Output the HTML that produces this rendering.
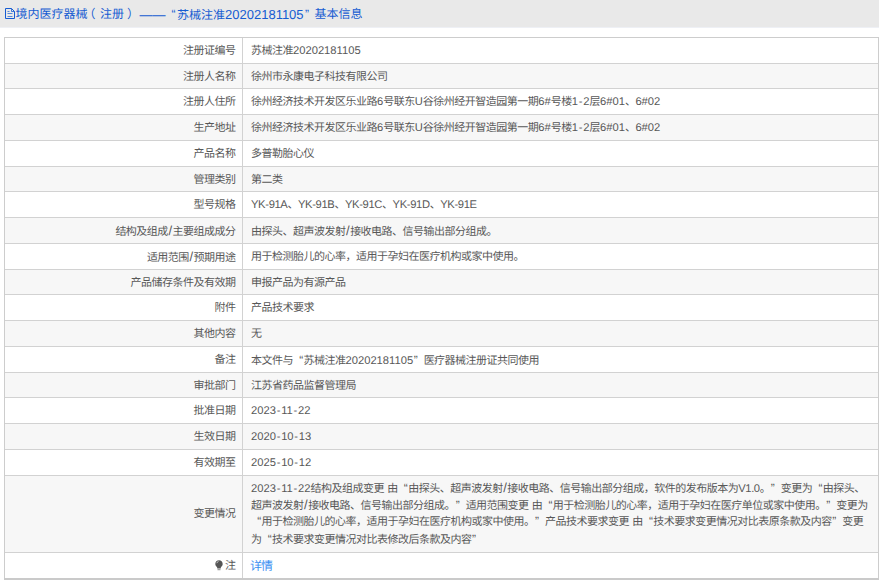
<!DOCTYPE html>
<html lang="zh-CN"><head><meta charset="utf-8">
<style>
*{margin:0;padding:0;box-sizing:border-box}
html,body{width:879px;height:587px;background:#fff;overflow:hidden}
body{font-family:"Liberation Sans",sans-serif;font-size:11px;letter-spacing:-0.5px;color:#585858;position:relative;text-rendering:geometricPrecision}
.hd{position:absolute;left:0;top:0;width:879px;height:27px;background:#e9e9e9;border-bottom:1px solid #eef0f5;box-sizing:content-box}
.hd .tt{position:absolute;top:6px;line-height:17px;font-size:12px;letter-spacing:0;color:#165cd2;white-space:nowrap}
.hd .e{font-size:13px}
.hd svg{position:absolute;left:5px;top:8px}
.r{position:absolute;left:4px;width:875px}
.h{position:absolute;left:4px;width:875px;height:1px;background:#d2d2d2}
.vd{position:absolute;left:242px;top:37px;width:1px;height:541px;background:#d2d2d2}
.bl{position:absolute;left:4px;top:37px;width:1px;height:543px;background:#cdcdcd}
.br{position:absolute;left:878px;top:37px;width:1px;height:543px;background:#cdcdcd}
.bt{position:absolute;left:4px;top:37px;width:875px;height:1px;background:#cdcdcd}
.bb{position:absolute;left:4px;top:578px;width:875px;height:2px;background:#cacaca}
.t{position:absolute;line-height:16px;white-space:nowrap}
.l{right:643.5px;text-align:right}
.v{left:251px}
.e{font-size:11.2px;letter-spacing:0}
.ek{letter-spacing:-0.35px}
.hy{margin:0 0.75px}
.ek.hy{margin:0}
.e.sl{margin:0 0.5px;font-size:13px}
.sp{letter-spacing:0;font-size:11.5px}
.q1,.q2{display:inline-block;width:10.5px;letter-spacing:0;font-size:12px}
.q1{text-align:right;padding-right:0.3px}
.q2{text-align:left;padding-left:0.5px}
.vv{letter-spacing:-0.4px}
.ch .cl{height:17.2px;line-height:17.2px}
a{color:#3a8ef2;font-size:12px;letter-spacing:-1px;position:relative;left:-1px}
.bulb{display:inline-block;margin-right:1.5px;vertical-align:-1.5px;position:relative;left:-0.5px}
</style></head><body>
<div class="hd"><svg width="11" height="12" viewBox="0 0 11 12"><path d="M0.5 0.5H6.5L9.5 3.5V10.5H0.5Z" fill="none" stroke="#165cd2"/><path d="M2.5 3.5H4.5M2.5 5.5H7.5M2.5 8.5H7.5" stroke="#165cd2" stroke-opacity="0.7"/><path d="M6.5 0.5V3.5H9.5" fill="none" stroke="#165cd2" stroke-width="0.8"/></svg>
<div class="tt" style="left:15.5px">境内医疗器械</div>
<div class="tt" style="left:83.5px">（</div>
<div class="tt" style="left:100px">注册</div>
<div class="tt" style="left:127px">）</div>
<div class="tt" style="left:139.5px;letter-spacing:0.5px"><span class="e">——</span></div>
<div class="tt" style="left:171.5px">“</div>
<div class="tt" style="left:177px">苏械注准<span class="e">20202181105</span></div>
<div class="tt" style="left:305px">”</div>
<div class="tt" style="left:314.5px">基本信息</div>
</div>
<div class="r" style="top:37px;height:26px;background:#fff"></div>
<div class="t l" style="top:43.00px">注册证编号</div>
<div class="t v" style="top:43.00px">苏械注准<span class="e">20202181105</span></div>
<div class="r" style="top:63px;height:25px;background:#f7f7f7"></div>
<div class="t l" style="top:68.50px">注册人名称</div>
<div class="t v" style="top:68.50px">徐州市永康电子科技有限公司</div>
<div class="r" style="top:88px;height:26px;background:#fff"></div>
<div class="t l" style="top:94.00px">注册人住所</div>
<div class="t v" style="top:94.00px">徐州经济技术开发区乐业路<span class="e">6</span>号联东<span class="e">U</span>谷徐州经开智造园第一期<span class="e">6#</span>号楼<span class="e">1</span><span class="e hy">-</span><span class="e">2</span>层<span class="e">6#01</span>、<span class="e">6#02</span></div>
<div class="r" style="top:114px;height:26px;background:#f7f7f7"></div>
<div class="t l" style="top:120.00px">生产地址</div>
<div class="t v" style="top:120.00px">徐州经济技术开发区乐业路<span class="e">6</span>号联东<span class="e">U</span>谷徐州经开智造园第一期<span class="e">6#</span>号楼<span class="e">1</span><span class="e hy">-</span><span class="e">2</span>层<span class="e">6#01</span>、<span class="e">6#02</span></div>
<div class="r" style="top:140px;height:26px;background:#fff"></div>
<div class="t l" style="top:146.00px">产品名称</div>
<div class="t v" style="top:146.00px">多普勒胎心仪</div>
<div class="r" style="top:166px;height:25px;background:#f7f7f7"></div>
<div class="t l" style="top:171.50px">管理类别</div>
<div class="t v" style="top:171.50px">第二类</div>
<div class="r" style="top:191px;height:26px;background:#fff"></div>
<div class="t l" style="top:197.00px">型号规格</div>
<div class="t v" style="top:197.00px"><span class="e ek">YK</span><span class="e ek hy">-</span><span class="e ek">91A</span>、<span class="e ek">YK</span><span class="e ek hy">-</span><span class="e ek">91B</span>、<span class="e ek">YK</span><span class="e ek hy">-</span><span class="e ek">91C</span>、<span class="e ek">YK</span><span class="e ek hy">-</span><span class="e ek">91D</span>、<span class="e ek">YK</span><span class="e ek hy">-</span><span class="e ek">91E</span></div>
<div class="r" style="top:217px;height:26px;background:#f7f7f7"></div>
<div class="t l" style="top:223.00px">结构及组成<span class="e sl">/</span>主要组成成分</div>
<div class="t v" style="top:223.00px">由探头、超声波发射<span class="e sl">/</span>接收电路、信号输出部分组成。</div>
<div class="r" style="top:243px;height:26px;background:#fff"></div>
<div class="t l" style="top:249.00px">适用范围<span class="e sl">/</span>预期用途</div>
<div class="t v" style="top:249.00px">用于检测胎儿的心率，适用于孕妇在医疗机构或家中使用。</div>
<div class="r" style="top:269px;height:25px;background:#f7f7f7"></div>
<div class="t l" style="top:274.50px">产品储存条件及有效期</div>
<div class="t v" style="top:274.50px">申报产品为有源产品</div>
<div class="r" style="top:294px;height:26px;background:#fff"></div>
<div class="t l" style="top:300.00px">附件</div>
<div class="t v" style="top:300.00px">产品技术要求</div>
<div class="r" style="top:320px;height:26px;background:#f7f7f7"></div>
<div class="t l" style="top:326.00px">其他内容</div>
<div class="t v" style="top:326.00px">无</div>
<div class="r" style="top:346px;height:26px;background:#fff"></div>
<div class="t l" style="top:352.00px">备注</div>
<div class="t v" style="top:352.00px">本文件与<span class="q1">“</span>苏械注准<span class="e">20202181105</span><span class="q2">”</span>医疗器械注册证共同使用</div>
<div class="r" style="top:372px;height:25px;background:#f7f7f7"></div>
<div class="t l" style="top:377.50px">审批部门</div>
<div class="t v" style="top:377.50px">江苏省药品监督管理局</div>
<div class="r" style="top:397px;height:26px;background:#fff"></div>
<div class="t l" style="top:403.00px">批准日期</div>
<div class="t v" style="top:403.00px"><span class="e">2023</span><span class="e hy">-</span><span class="e">11</span><span class="e hy">-</span><span class="e">22</span></div>
<div class="r" style="top:423px;height:26px;background:#f7f7f7"></div>
<div class="t l" style="top:429.00px">生效日期</div>
<div class="t v" style="top:429.00px"><span class="e">2020</span><span class="e hy">-</span><span class="e">10</span><span class="e hy">-</span><span class="e">13</span></div>
<div class="r" style="top:449px;height:26px;background:#fff"></div>
<div class="t l" style="top:455.00px">有效期至</div>
<div class="t v" style="top:455.00px"><span class="e">2025</span><span class="e hy">-</span><span class="e">10</span><span class="e hy">-</span><span class="e">12</span></div>
<div class="r" style="top:475px;height:77px;background:#f7f7f7"></div>
<div class="t l" style="top:505.50px">变更情况</div>
<div class="t v ch" style="top:479.00px"><div class="cl"><span class="e">2023</span><span class="e hy">-</span><span class="e">11</span><span class="e hy">-</span><span class="e">22</span>结构及组成变更<span class="sp"> </span>由<span class="q1">“</span>由探头、超声波发射<span class="e sl">/</span>接收电路、信号输出部分组成，软件的发布版本为<span class="e vv">V1.0</span>。<span class="q2">”</span>变更为<span class="q1">“</span>由探头、</div><div class="cl">超声波发射<span class="e sl">/</span>接收电路、信号输出部分组成。<span class="q2">”</span>适用范围变更<span class="sp"> </span>由<span class="q1">“</span>用于检测胎儿的心率，适用于孕妇在医疗单位或家中使用。<span class="q2">”</span>变更为</div><div class="cl"><span class="q1">“</span>用于检测胎儿的心率，适用于孕妇在医疗机构或家中使用。<span class="q2">”</span>产品技术要求变更<span class="sp"> </span>由<span class="q1">“</span>技术要求变更情况对比表原条款及内容<span class="q2">”</span>变更</div><div class="cl">为<span class="q1">“</span>技术要求变更情况对比表修改后条款及内容<span class="q2">”</span></div></div>
<div class="r" style="top:552px;height:26px;background:#fff"></div>
<div class="t l" style="top:558.00px"><svg class="bulb" width="8" height="11" viewBox="0 0 8 11"><path d="M4 0.3C1.9 0.3 0.3 1.9 0.3 3.9C0.3 5.6 1.6 6.4 2.2 7.6V8.4H5.8V7.6C6.4 6.4 7.7 5.6 7.7 3.9C7.7 1.9 6.1 0.3 4 0.3Z" fill="#555"/><path d="M2.5 9.2H5.5V10.2H2.5Z" fill="#888"/><path d="M1.8 3.2Q2.2 1.6 3.6 1.3" stroke="#ddd" stroke-width="0.8" fill="none"/></svg>注</div>
<div class="t v" style="top:558.00px"><a>详情</a></div>
<div class="h" style="top:63px"></div>
<div class="h" style="top:88px"></div>
<div class="h" style="top:114px"></div>
<div class="h" style="top:140px"></div>
<div class="h" style="top:166px"></div>
<div class="h" style="top:191px"></div>
<div class="h" style="top:217px"></div>
<div class="h" style="top:243px"></div>
<div class="h" style="top:269px"></div>
<div class="h" style="top:294px"></div>
<div class="h" style="top:320px"></div>
<div class="h" style="top:346px"></div>
<div class="h" style="top:372px"></div>
<div class="h" style="top:397px"></div>
<div class="h" style="top:423px"></div>
<div class="h" style="top:449px"></div>
<div class="h" style="top:475px"></div>
<div class="h" style="top:552px"></div>
<div class="vd"></div>
<div class="bl"></div><div class="br"></div><div class="bt"></div><div class="bb"></div>
</body></html>
